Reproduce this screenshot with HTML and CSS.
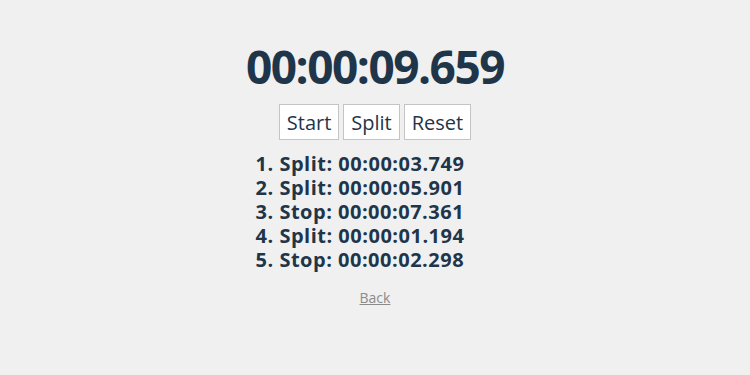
FILE: index.html
```html
<!DOCTYPE html>
<html>
<head>
<meta charset="utf-8">
<link rel="stylesheet" href="styles.css">
</head>
<body>
<main class="app">
  <h1 class="time">00:00:09.659</h1>
  <div class="controls">
    <button class="btn">Start</button>
    <button class="btn">Split</button>
    <button class="btn">Reset</button>
  </div>
  <ol class="splits">
    <li>1. Split: 00:00:03.749</li>
    <li>2. Split: 00:00:05.901</li>
    <li>3. Stop: 00:00:07.361</li>
    <li>4. Split: 00:00:01.194</li>
    <li>5. Stop: 00:00:02.298</li>
  </ol>
  <a class="back" href="#">Back</a>
</main>
</body>
</html>
```
FILE: styles.css
```css
html, body {
  margin: 0;
  padding: 0;
  background: #f0f0f0;
}
body {
  font-family: "Open Sans", "DejaVu Sans", sans-serif;
  color: #1f3549;
}
.app {
  display: flex;
  flex-direction: column;
  align-items: center;
  padding-top: 36px;
}
.time {
  margin: 0;
  font-size: 46px;
  font-weight: 700;
  line-height: 60px;
  letter-spacing: -1.5px;
}
.controls {
  display: flex;
  gap: 4px;
  margin-top: 8px;
}
.btn {
  font-family: inherit;
  font-size: 20px;
  color: #1f3549;
  background: #fff;
  border: 1px solid #c4c4c4;
  height: 36px;
  padding: 0 7px;
  margin: 0;
}
.splits {
  list-style: none;
  margin: 12px 0 0;
  padding: 0 30px 0 0;
  font-size: 20px;
  font-weight: 700;
  line-height: 24px;
  letter-spacing: 0.5px;
}
.back {
  margin-top: 16px;
  font-size: 14px;
  color: #8a8a8a;
}
```
